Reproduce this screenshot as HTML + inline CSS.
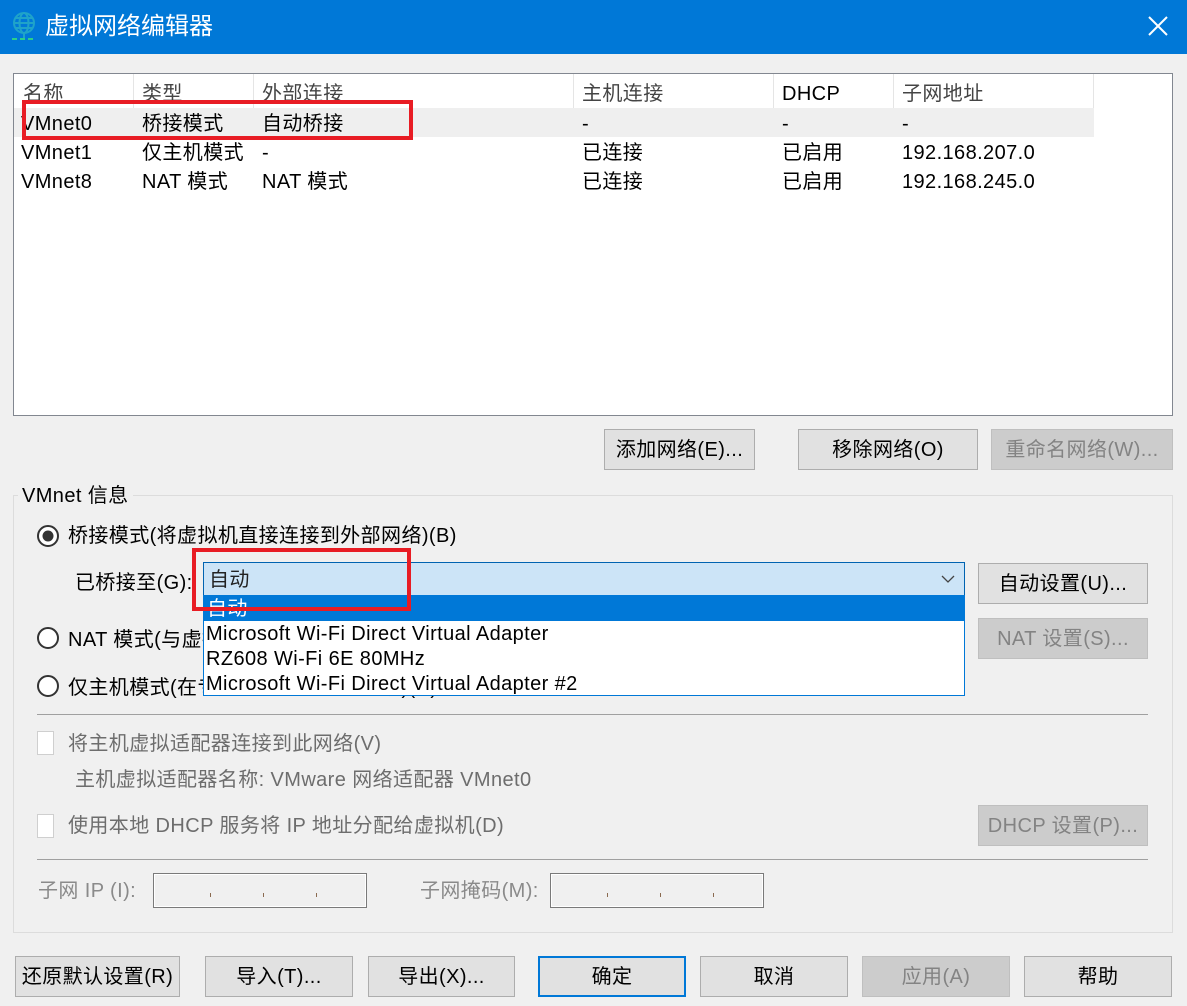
<!DOCTYPE html>
<html><head><meta charset="utf-8"><style>
*{margin:0;padding:0;box-sizing:border-box}
body{width:1187px;height:1006px;background:#f0f0f0;position:relative;overflow:hidden;font-family:"Liberation Sans","Noto Sans CJK SC",sans-serif;font-size:20px;letter-spacing:0.4px;color:#000}
.a{position:absolute;white-space:nowrap;line-height:28px}
.btn{position:absolute;background:#e1e1e1;border:1px solid #adadad;text-align:center;line-height:40px;font-size:20px}
.dis{background:#cccccc;border-color:#bfbfbf;color:#838383}
.g{color:#6d6d6d}
.sep{position:absolute;width:1px;background:#e5e5e5;top:74px;height:34px}
</style></head><body>
<div style="position:absolute;left:0;top:0;width:1187px;height:54px;background:#0078d7"></div>
<svg style="position:absolute;left:10px;top:10px" width="28" height="32" viewBox="0 0 28 32">
<g fill="none" stroke="#1fa3c9" stroke-width="2"><circle cx="14" cy="13" r="10"/><ellipse cx="14" cy="13" rx="4.5" ry="10"/><line x1="4" y1="13" x2="24" y2="13"/><line x1="6" y1="8" x2="22" y2="8"/><line x1="6" y1="18" x2="22" y2="18"/><line x1="14" y1="23" x2="14" y2="28"/></g>
<line x1="2" y1="29" x2="26" y2="29" stroke="#2bcf8a" stroke-width="2" stroke-dasharray="5 3"/></svg>
<div class="a" style="left:45px;top:12px;font-size:24px;line-height:30px;color:#fff;letter-spacing:0">虚拟网络编辑器</div>
<svg style="position:absolute;left:1147px;top:15px" width="22" height="22"><path d="M2 2L20 20M20 2L2 20" stroke="#fff" stroke-width="2"/></svg>

<div style="position:absolute;left:13px;top:73px;width:1160px;height:343px;background:#fff;border:1px solid #828790"></div>
<div style="position:absolute;left:14px;top:108px;width:1080px;height:29px;background:#efefef"></div>
<div class="sep" style="left:133px"></div><div class="sep" style="left:253px"></div><div class="sep" style="left:573px"></div><div class="sep" style="left:773px"></div><div class="sep" style="left:893px"></div><div class="sep" style="left:1093px"></div>
<div class="a" style="left:23px;top:80px;color:#444">名称</div>
<div class="a" style="left:142px;top:80px;color:#444">类型</div>
<div class="a" style="left:262px;top:80px;color:#444">外部连接</div>
<div class="a" style="left:582px;top:80px;color:#444">主机连接</div>
<div class="a" style="left:782px;top:80px">DHCP</div>
<div class="a" style="left:902px;top:80px;color:#444">子网地址</div>
<div class="a" style="left:21px;top:110px">VMnet0</div><div class="a" style="left:142px;top:110px">桥接模式</div><div class="a" style="left:262px;top:110px">自动桥接</div><div class="a" style="left:582px;top:110px">-</div><div class="a" style="left:782px;top:110px">-</div><div class="a" style="left:902px;top:110px">-</div>
<div class="a" style="left:21px;top:139px">VMnet1</div><div class="a" style="left:142px;top:139px">仅主机模式</div><div class="a" style="left:262px;top:139px">-</div><div class="a" style="left:582px;top:139px">已连接</div><div class="a" style="left:782px;top:139px">已启用</div><div class="a" style="left:902px;top:139px">192.168.207.0</div>
<div class="a" style="left:21px;top:168px">VMnet8</div><div class="a" style="left:142px;top:168px">NAT 模式</div><div class="a" style="left:262px;top:168px">NAT 模式</div><div class="a" style="left:582px;top:168px">已连接</div><div class="a" style="left:782px;top:168px">已启用</div><div class="a" style="left:902px;top:168px">192.168.245.0</div>
<div style="position:absolute;left:22px;top:100px;width:391px;height:40px;border:4px solid #e81c24"></div>

<div class="btn" style="left:604px;top:429px;width:151px;height:41px">添加网络(E)...</div>
<div class="btn" style="left:798px;top:429px;width:180px;height:41px">移除网络(O)</div>
<div class="btn dis" style="left:991px;top:429px;width:182px;height:41px">重命名网络(W)...</div>

<div style="position:absolute;left:13px;top:495px;width:1160px;height:438px;border:1px solid #dcdcdc"></div>
<div class="a" style="left:18px;top:482px;background:#f0f0f0;padding:0 4px">VMnet 信息</div>

<svg style="position:absolute;left:36px;top:524px" width="24" height="24"><circle cx="12" cy="12" r="10" fill="#fff" stroke="#333" stroke-width="2"/><circle cx="12" cy="12" r="5.5" fill="#333"/></svg>
<div class="a" style="left:68px;top:522px">桥接模式(将虚拟机直接连接到外部网络)(B)</div>
<div class="a" style="left:75px;top:569px">已桥接至(G):</div>
<div style="position:absolute;left:203px;top:562px;width:762px;height:34px;background:#cce4f7;border:1px solid #0063b1"></div>
<div class="a" style="left:209px;top:566px;color:#222">自动</div>
<svg style="position:absolute;left:941px;top:574px" width="14" height="10"><path d="M1 2L7 8L13 2" fill="none" stroke="#444" stroke-width="1.3"/></svg>
<div class="a" style="left:68px;top:626px">NAT 模式(与虚拟机共享主机的 IP 地址)(N)</div>
<div class="a" style="left:68px;top:674px">仅主机模式(在专用网络内连接虚拟机)(H)</div>
<div style="position:absolute;left:203px;top:595px;width:762px;height:101px;background:#fff;border:1px solid #0078d7"></div>
<div style="position:absolute;left:204px;top:596px;width:760px;height:25px;background:#0078d7"></div>
<div class="a" style="left:207px;top:595px;color:#fff">自动</div>
<div class="a" style="left:206px;top:620px">Microsoft Wi-Fi Direct Virtual Adapter</div>
<div class="a" style="left:206px;top:645px">RZ608 Wi-Fi 6E 80MHz</div>
<div class="a" style="left:206px;top:670px">Microsoft Wi-Fi Direct Virtual Adapter #2</div>
<div style="position:absolute;left:192px;top:548px;width:219px;height:63px;border:4px solid #e81c24"></div>
<div class="btn" style="left:978px;top:563px;width:170px;height:41px">自动设置(U)...</div>
<div class="btn dis" style="left:978px;top:618px;width:170px;height:41px">NAT 设置(S)...</div>

<svg style="position:absolute;left:36px;top:626px" width="24" height="24"><circle cx="12" cy="12" r="10" fill="#fff" stroke="#333" stroke-width="2"/></svg>
<svg style="position:absolute;left:36px;top:674px" width="24" height="24"><circle cx="12" cy="12" r="10" fill="#fff" stroke="#333" stroke-width="2"/></svg>

<div style="position:absolute;left:37px;top:714px;width:1111px;height:1px;background:#a0a0a0"></div>
<div style="position:absolute;left:37px;top:731px;width:17px;height:24px;background:#fff;border:1px solid #cfcfcf"></div>
<div class="a g" style="left:68px;top:730px">将主机虚拟适配器连接到此网络(V)</div>
<div class="a g" style="left:75px;top:766px">主机虚拟适配器名称: VMware 网络适配器 VMnet0</div>
<div style="position:absolute;left:37px;top:814px;width:17px;height:24px;background:#fff;border:1px solid #cfcfcf"></div>
<div class="a g" style="left:68px;top:812px">使用本地 DHCP 服务将 IP 地址分配给虚拟机(D)</div>
<div class="btn dis" style="left:978px;top:805px;width:170px;height:41px">DHCP 设置(P)...</div>
<div style="position:absolute;left:37px;top:859px;width:1111px;height:1px;background:#a0a0a0"></div>

<div class="a" style="left:38px;top:877px;color:#8a8a8a">子网 IP (I):</div>
<div style="position:absolute;left:153px;top:873px;width:214px;height:35px;border:1px solid #7a7a7a;box-shadow:inset 0 0 0 1px #fff"></div>
<div class="a" style="left:420px;top:877px;color:#8a8a8a">子网掩码(M):</div>
<div style="position:absolute;left:550px;top:873px;width:214px;height:35px;border:1px solid #7a7a7a;box-shadow:inset 0 0 0 1px #fff"></div>
<div style="position:absolute;left:210px;top:893px;width:1px;height:4px;background:#8a6a50"></div>
<div style="position:absolute;left:263px;top:893px;width:1px;height:4px;background:#8a6a50"></div>
<div style="position:absolute;left:316px;top:893px;width:1px;height:4px;background:#8a6a50"></div>
<div style="position:absolute;left:607px;top:893px;width:1px;height:4px;background:#8a6a50"></div>
<div style="position:absolute;left:660px;top:893px;width:1px;height:4px;background:#8a6a50"></div>
<div style="position:absolute;left:713px;top:893px;width:1px;height:4px;background:#8a6a50"></div>

<div class="btn" style="left:15px;top:956px;width:165px;height:41px">还原默认设置(R)</div>
<div class="btn" style="left:205px;top:956px;width:148px;height:41px">导入(T)...</div>
<div class="btn" style="left:368px;top:956px;width:147px;height:41px">导出(X)...</div>
<div class="btn" style="left:538px;top:956px;width:148px;height:41px;border:2px solid #0078d7;line-height:38px">确定</div>
<div class="btn" style="left:700px;top:956px;width:148px;height:41px">取消</div>
<div class="btn dis" style="left:862px;top:956px;width:148px;height:41px">应用(A)</div>
<div class="btn" style="left:1024px;top:956px;width:148px;height:41px">帮助</div>
</body></html>
